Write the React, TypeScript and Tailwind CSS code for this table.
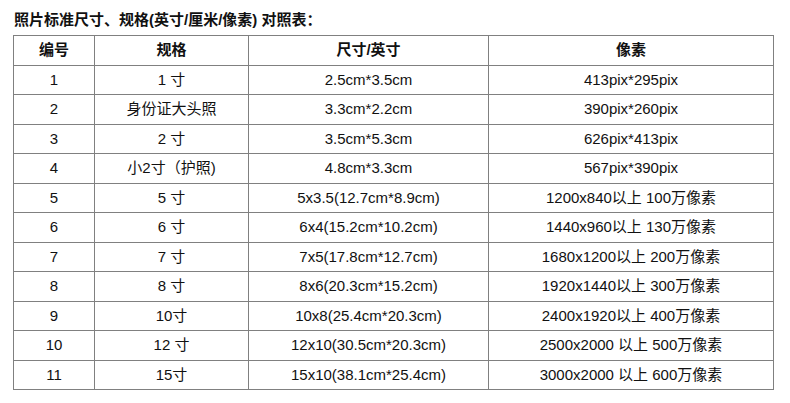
const rows: [string, string, string, string][] = [
  ["1", "1 寸", "2.5cm*3.5cm", "413pix*295pix"],
  ["2", "身份证大头照", "3.3cm*2.2cm", "390pix*260pix"],
  ["3", "2 寸", "3.5cm*5.3cm", "626pix*413pix"],
  ["4", "小2寸（护照)", "4.8cm*3.3cm", "567pix*390pix"],
  ["5", "5 寸", "5x3.5(12.7cm*8.9cm)", "1200x840以上 100万像素"],
  ["6", "6 寸", "6x4(15.2cm*10.2cm)", "1440x960以上 130万像素"],
  ["7", "7 寸", "7x5(17.8cm*12.7cm)", "1680x1200以上 200万像素"],
  ["8", "8 寸", "8x6(20.3cm*15.2cm)", "1920x1440以上 300万像素"],
  ["9", "10寸", "10x8(25.4cm*20.3cm)", "2400x1920以上 400万像素"],
  ["10", "12 寸", "12x10(30.5cm*20.3cm)", "2500x2000 以上 500万像素"],
  ["11", "15寸", "15x10(38.1cm*25.4cm)", "3000x2000 以上 600万像素"],
]

export default function App() {
  return (
    <div
      className="min-h-screen bg-white pl-[13px] pt-[11px] text-[#111]"
      style={{ fontFamily: '"Liberation Sans", Arial, "Noto Sans CJK SC", sans-serif' }}
    >
      <h1 className="mb-[6px] pl-[1px] text-[15px] font-bold leading-[18px]">
        照片标准尺寸、规格(英寸/厘米/像素) 对照表：
      </h1>

      <table className="w-[760px] table-fixed border-collapse text-[15px]">
        <colgroup>
          <col className="w-[81px]" />
          <col className="w-[154px]" />
          <col className="w-[240px]" />
          <col className="w-[285px]" />
        </colgroup>
        <thead>
          <tr className="h-[29.5px] font-bold">
            <th className="border border-[#808080] p-0 font-bold">编号</th>
            <th className="border border-[#808080] p-0 font-bold">规格</th>
            <th className="border border-[#808080] p-0 font-bold">尺寸/英寸</th>
            <th className="border border-[#808080] p-0 font-bold">像素</th>
          </tr>
        </thead>
        <tbody>
          {rows.map((r) => (
            <tr key={r[0]} className="h-[29.5px]">
              {r.map((c, i) => (
                <td key={i} className="border border-[#808080] p-0 text-center leading-[18px]">
                  {c}
                </td>
              ))}
            </tr>
          ))}
        </tbody>
      </table>
    </div>
  )
}
